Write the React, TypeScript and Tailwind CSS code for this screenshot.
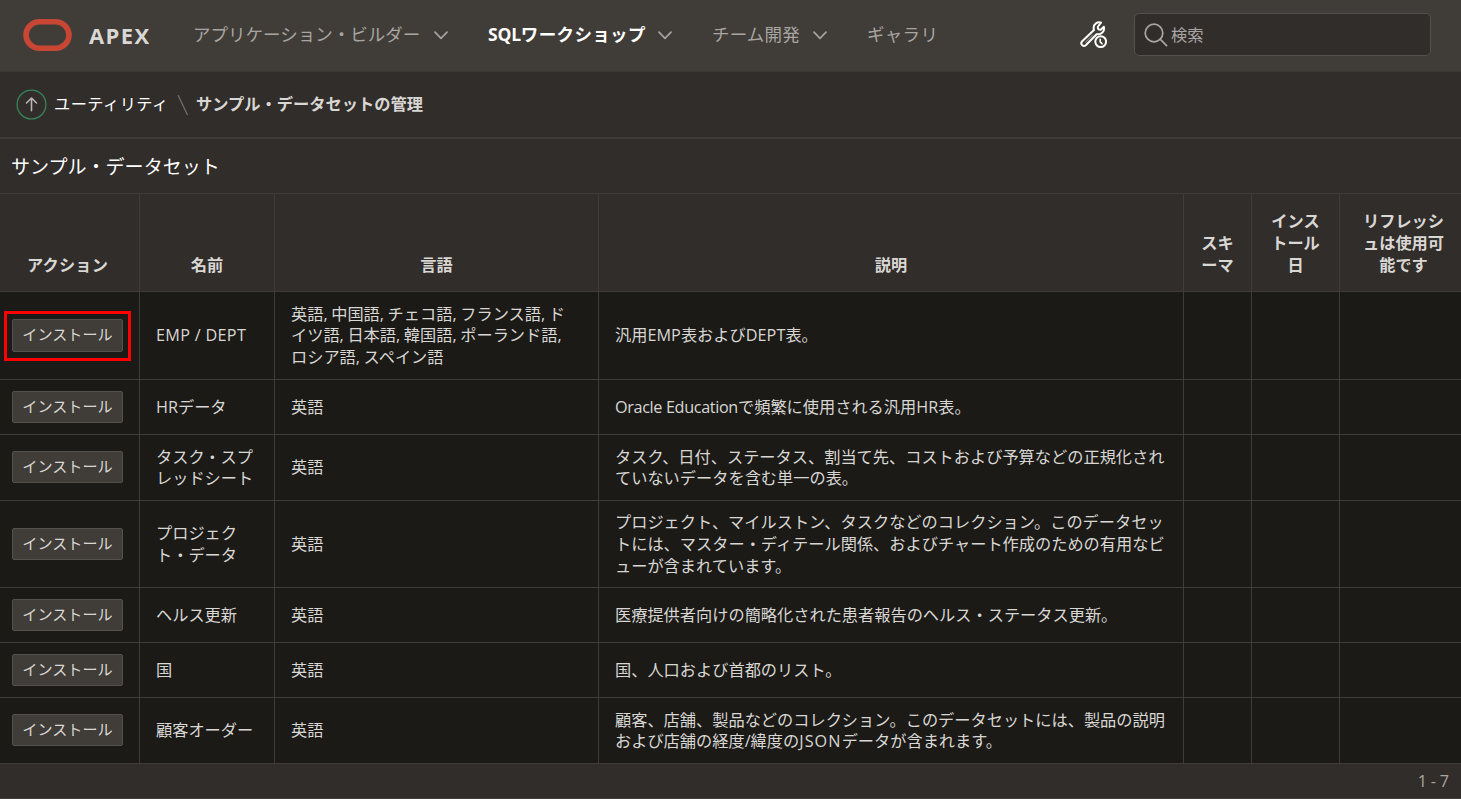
import React from "react";

type Row = { height: string; name: React.ReactNode[]; langs: React.ReactNode[]; desc: React.ReactNode[]; lift?: boolean; marked?: boolean };

const Caps = ({ children }: { children: React.ReactNode }) => (
  <span className="tracking-[0.05px]">{children}</span>
);

const List = ({ children }: { children: React.ReactNode }) => (
  <span className="[word-spacing:-0.6px]">{children}</span>
);

const rows: Row[] = [
  {
    height: "h-[88px]",
    name: [<span className="tracking-[0.3px]">EMP / DEPT</span>],
    langs: [
      <List>英語, 中国語, チェコ語, フランス語, ド</List>,
      <List>イツ語, 日本語, 韓国語, ポーランド語,</List>,
      <List>ロシア語, スペイン語</List>,
    ],
    desc: [<>汎用<Caps>EMP</Caps>表および<Caps>DEPT</Caps>表。</>],
    lift: true,
    marked: true,
  },
  {
    height: "h-[55px]",
    name: ["HRデータ"],
    langs: ["英語"],
    desc: [<><span className="tracking-[-0.35px]">Oracle Education</span>で頻繁に使用される汎用<Caps>HR</Caps>表。</>],
  },
  {
    height: "h-[66px]",
    name: ["タスク・スプ", "レッドシート"],
    langs: ["英語"],
    desc: ["タスク、日付、ステータス、割当て先、コストおよび予算などの正規化され", "ていないデータを含む単一の表。"],
    lift: true,
  },
  {
    height: "h-[87px]",
    name: ["プロジェク", "ト・データ"],
    langs: ["英語"],
    desc: [
      "プロジェクト、マイルストン、タスクなどのコレクション。このデータセッ",
      "トには、マスター・ディテール関係、およびチャート作成のための有用なビ",
      "ューが含まれています。",
    ],
  },
  { height: "h-[55px]", name: ["ヘルス更新"], langs: ["英語"], desc: ["医療提供者向けの簡略化された患者報告のヘルス・ステータス更新。"] },
  { height: "h-[55px]", name: ["国"], langs: ["英語"], desc: ["国、人口および首都のリスト。"] },
  {
    height: "h-[66px]",
    name: ["顧客オーダー"],
    langs: ["英語"],
    desc: [
      "顧客、店舗、製品などのコレクション。このデータセットには、製品の説明",
      <>および店舗の経度/緯度の<span className="tracking-[1.1px]">JSON</span>データが含まれます。</>,
    ],
    lift: true,
  },
];

const headers = [
  ["アクション"],
  ["名前"],
  ["言語"],
  ["説明"],
  ["スキ", "ーマ"],
  ["インス", "トール", "日"],
  ["リフレッシ", "ュは使用可", "能です"],
];

const Lines = ({ items }: { items: React.ReactNode[] }) => (
  <>
    {items.map((l, i) => (
      <span key={i} className="block whitespace-nowrap">
        {l}
      </span>
    ))}
  </>
);

const Chevron = ({ className }: { className: string }) => (
  <svg className={className} width="14" height="9" viewBox="0 0 14 9" fill="none" stroke="#a5a29f" strokeWidth="1.7" strokeLinecap="round" strokeLinejoin="round">
    <path d="M1 1.2 7 7.3 13 1.2" />
  </svg>
);

const WrenchClock = () => (
  <svg className="mt-[21px] ml-[142px] shrink-0" width="28" height="28" viewBox="0 0 28 28" fill="none" stroke="#fff" strokeWidth="2" strokeLinecap="round" strokeLinejoin="round">
    <path d="M21 1.6C17.4.5 13.6 3 13.6 6.8c0 .9.1 1.5.4 2.2L2.2 20.3c-2.4 2.6.9 6.4 3.6 3.9L16.6 13.2c4.600.9 8.500-2.800 7.300-7.500l-3.200 3.100c-2 .3-3.300-1.200-2.700-3.300Z" />
    <path d="M5.6 21 12.400 14.300" strokeWidth="0.9" stroke="#b5b2af" />
    <circle cx="20.700" cy="20.600" r="5.400" />
    <path d="M20.200 18.200v2.700l1.900 1.900" strokeWidth="1.600" />
  </svg>
);

const cell = "border-r border-b border-[#403c38] p-0 last:border-r-0";

export default function App() {
  return (
    <div className="flex h-[799px] w-[1461px] flex-col overflow-hidden bg-[#312d2a] font-['Open_Sans','Noto_Sans_CJK_JP',sans-serif] text-[16.22px] leading-[21.7px] text-[#d9d7d4]">
      <header className="flex h-[72px] shrink-0 items-start border-b border-[#3b3734] bg-[#403c38] text-[17.5px] leading-[24px] whitespace-nowrap text-[#a8a5a2]">
        <svg className="mt-[19px] ml-[23px] shrink-0" width="49" height="32" viewBox="0 0 49 32" fill="none">
          <rect x="3" y="2.8" width="43" height="26.4" rx="13.2" stroke="#c74634" strokeWidth="5.6" />
        </svg>
        <div className="mt-[23px] ml-[17px] w-[62px] text-[22px] font-bold tracking-[1.4px] text-[#d9d7d4]">APEX</div>
        <div className="mt-[22px] ml-[42px] w-[228px]">アプリケーション・ビルダー</div>
        <Chevron className="mt-[31px] ml-[13px] shrink-0" />
        <div className="mt-[22px] ml-[40px] w-[158px] font-bold tracking-[0.35px] text-white"><span className="tracking-[-0.2px]">SQL</span>ワークショップ</div>
        <Chevron className="mt-[31px] ml-[12px] shrink-0" />
        <div className="mt-[22px] ml-[40px] w-[89px] tracking-[0.2px]">チーム開発</div>
        <Chevron className="mt-[31px] ml-[12px] shrink-0" />
        <div className="mt-[22px] ml-[40px] w-[71px] tracking-[0.3px]">ギャラリ</div>
        <WrenchClock />
        <div className="mt-[13px] ml-[26px] flex h-[43px] w-[297px] shrink-0 items-center rounded-[5px] border border-[#54504c] bg-[#312d2a] text-[16.25px]">
          <svg className="ml-[9px] shrink-0" width="24" height="24" viewBox="0 0 24 24" fill="none" stroke="#a8a5a2" strokeWidth="1.7" strokeLinecap="round">
            <circle cx="10" cy="10" r="8.8" />
            <path d="m16.4 16.4 6.2 6.2" />
          </svg>
          <span className="ml-[3px]">検索</span>
        </div>
      </header>

      <nav className="flex h-[67px] shrink-0 items-center border-b-2 border-[#3f3b38] whitespace-nowrap">
        <svg className="ml-4 shrink-0" width="31" height="31" viewBox="0 0 31 31" fill="none" strokeLinecap="round" strokeLinejoin="round">
          <circle cx="15.5" cy="15.5" r="14.4" stroke="#37855a" strokeWidth="1.3" />
          <path d="M15.5 21.7V9.2M10.500 14l5-5 5 5" stroke="#b8b5b2" strokeWidth="1.6" />
        </svg>
        <span className="ml-[7px] w-[114px] pt-px tracking-[0.45px] text-white">ユーティリティ</span>
        <svg className="ml-[9px] shrink-0" width="12" height="22" viewBox="0 0 12 22" fill="none" stroke="#75716d" strokeWidth="1.2">
          <path d="m1 1 9.500 20" />
        </svg>
        <span className="ml-[7px] pt-px text-[16.25px] font-bold">サンプル・データセットの管理</span>
      </nav>

      <div className="flex h-[55px] shrink-0 items-center border-b border-[#403c38] pt-[4px] pl-[11px] text-[19.05px] text-white">サンプル・データセット</div>

      <table className="w-[1461px] shrink-0 table-fixed border-separate border-spacing-0">
        <colgroup>
          <col className="w-[140px]" />
          <col className="w-[135px]" />
          <col className="w-[324px]" />
          <col className="w-[585px]" />
          <col className="w-[68px]" />
          <col className="w-[88px]" />
          <col className="w-[121px]" />
        </colgroup>
        <thead>
          <tr className="h-[98px]">
            {headers.map((h, i) => (
              <th
                key={i}
                className={`${cell} pb-[14.5px] text-center align-bottom font-bold ${i === 6 ? "pl-[6px]" : i === 0 ? "pr-[4px] tracking-[0.2px]" : ""}`}
              >
                <Lines items={h} />
              </th>
            ))}
          </tr>
        </thead>
        <tbody className="bg-[#1b1a17]">
          {rows.map((r, i) => (
            <tr key={i} className={r.height}>
              <td className={`${cell} pl-3 ${r.lift ? "pb-px" : ""}`}>
                <div className="relative w-[111px]">
                  <button
                    className={`flex w-[111px] items-center justify-center rounded-[2px] border border-[#54504c] bg-[#403c38] text-[15.1px] leading-none whitespace-nowrap ${r.marked ? "h-[33px]" : "h-8"}`}
                  >
                    インストール
                  </button>
                  {r.marked && <div className="absolute -top-[8px] -left-[8px] h-[50px] w-[127px] border-3 border-[#ff0000]" />}
                </div>
              </td>
              <td className={`${cell} pt-[1.5px] pl-4`}><Lines items={r.name} /></td>
              <td className={`${cell} pt-[1.5px] pl-4`}><Lines items={r.langs} /></td>
              <td className={`${cell} pt-[1.5px] pl-4`}><Lines items={r.desc} /></td>
              <td className={cell} />
              <td className={cell} />
              <td className={cell} />
            </tr>
          ))}
        </tbody>
      </table>

      <footer className="flex h-[35px] shrink-0 items-center justify-end border-b border-[#403c38] pt-[2px] pr-3 text-[#a8a5a2] [word-spacing:-0.5px]">1 - 7</footer>
    </div>
  );
}
